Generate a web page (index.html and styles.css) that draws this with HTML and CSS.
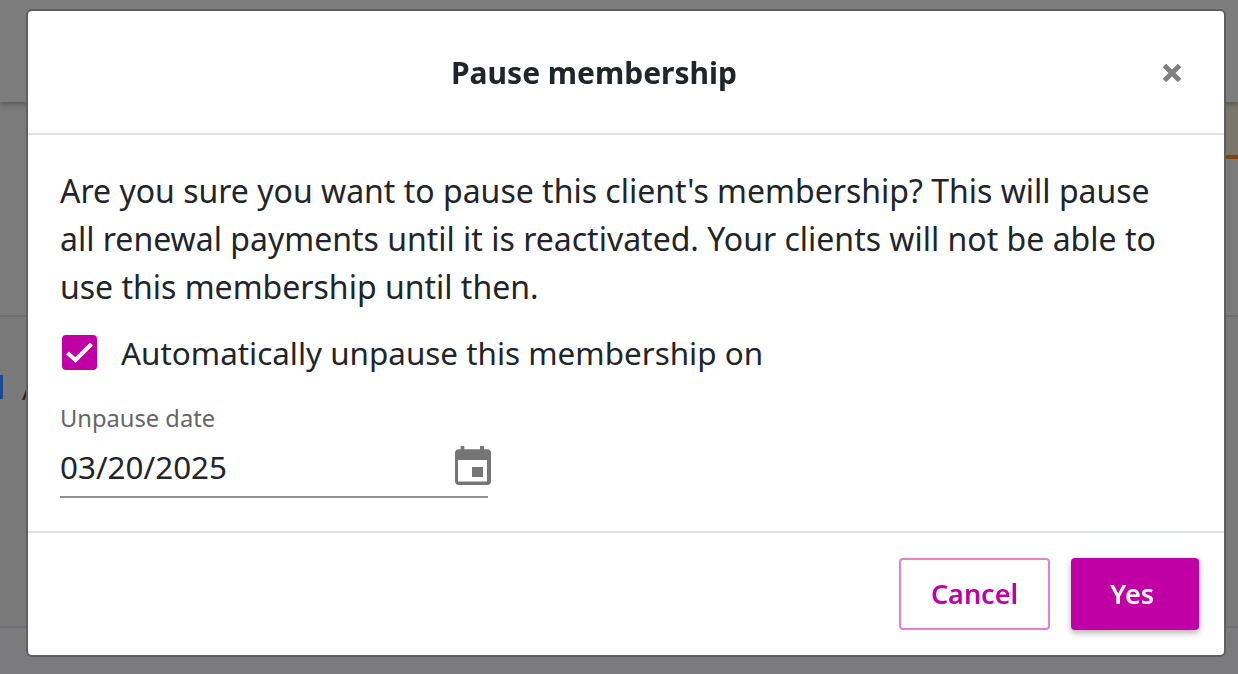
FILE: index.html
```html
<!DOCTYPE html>
<html lang="en">
<head>
<meta charset="utf-8">
<title>Pause membership</title>
<link rel="stylesheet" href="styles.css">
</head>
<body>
<div class="page">
  <div class="page-top"></div>
  <div class="page-banner"><div class="banner-image"></div></div>
  <div class="page-row"><span class="tab-mark"></span><span class="crumb">A</span></div>
  <div class="page-bottom"></div>
</div>
<div class="overlay">
  <div class="modal" role="dialog">
    <header class="modal-header">
      <h2 class="modal-title">Pause membership</h2>
      <svg class="close-icon" viewBox="0 0 20 20" aria-hidden="true"><path d="M2.4 2.4 17.6 17.6M17.6 2.4 2.4 17.6"/></svg>
    </header>
    <div class="modal-body">
      <p class="message">Are you sure you want to pause this client's membership? This will pause all renewal payments until it is reactivated. Your clients will not be able to use this membership until then.</p>
      <label class="check-row">
        <span class="checkbox"><svg viewBox="0 0 35 35" aria-hidden="true"><path d="M5.5 18 13.5 25 29.5 9"/></svg></span>
        <span class="check-label">Automatically unpause this membership on</span>
      </label>
      <div class="date-field">
        <div class="date-label">Unpause date</div>
        <div class="date-input">
          <span class="date-value">03/20/2025</span>
          <svg class="calendar-icon" viewBox="0 0 36 39" aria-hidden="true"><path fill-rule="evenodd" d="M5.7 0h3.6v3.3H25V0h4v3.3h3a4 4 0 0 1 4 4V35a4 4 0 0 1-4 4H4a4 4 0 0 1-4-4V7.3a4 4 0 0 1 4-4h1.7zM3 14v21.6h29V14z"/><rect x="17" y="21" width="11" height="10"/></svg>
        </div>
      </div>
    </div>
    <footer class="modal-footer">
      <button class="btn btn-outline" type="button">Cancel</button>
      <button class="btn btn-solid" type="button">Yes</button>
    </footer>
  </div>
</div>
</body>
</html>
```
FILE: styles.css
```css
* { box-sizing: border-box; }
html, body { margin: 0; height: 100%; overflow: hidden; }
body { background: #7b7b7c; font-family: "Noto Sans", "Open Sans", sans-serif; color: #212529; }

.page { height: 674px; display: flex; flex-direction: column; }
.page-top { height: 102px; background: #7d7d7d; box-shadow: 0 2px 6px rgba(0,0,0,.3); position: relative; }
.page-banner { height: 215px; border-bottom: 2px solid #6d6d6d; background: #7b7b7b; display: flex; justify-content: flex-end; align-items: flex-start; }
.banner-image { width: 40px; height: 57px; background: #7b766a; border-bottom: 4px solid #7d4417; }
.page-row { height: 311px; border-bottom: 2px solid #717172; display: flex; align-items: flex-start; padding-top: 58px; background: #7a7a7b; }
.tab-mark { width: 3px; height: 24px; background: #1b4a92; }
.crumb { margin-left: 19px; font-size: 28px; line-height: 28px; color: #262626; }
.page-bottom { flex: 1; background: #7b7b7e; }

.overlay { position: fixed; inset: 0; padding: 9px 12px 17px 26px; }
.modal { height: 648px; background: #fff; border: 2px solid #5f5f5f; border-radius: 6px; display: flex; flex-direction: column; }

.modal-header { height: 124px; border-bottom: 2px solid #dee2e6; display: flex; align-items: center; justify-content: center; position: relative; padding: 2px 64px 0 0; flex: none; }
.modal-title { margin: 0; font-size: 30px; font-weight: 700; line-height: 40px; color: #212529; }
.close-icon { position: absolute; right: 42px; top: 52px; width: 20px; height: 20px; fill: none; stroke: #808080; stroke-width: 5; }

.modal-body { flex: 1; padding: 32px 32px 0; }
.message { margin: 0; font-size: 32px; line-height: 48px; width: 1110px; color: #212529; }
.check-row { display: flex; align-items: center; height: 40px; margin-top: 22px; }
.checkbox { width: 35px; height: 35px; border-radius: 4px; background: #c000a4; display: flex; margin: -2px 0 0 2px; }
.checkbox svg { width: 35px; height: 35px; fill: none; stroke: #fff; stroke-width: 4; }
.check-label { margin-left: 24px; font-size: 31.4px; line-height: 40px; }

.date-field { width: 428px; margin-top: 30px; }
.date-label { font-size: 23.7px; line-height: 30px; color: #666; }
.date-input { height: 65px; border-bottom: 2px solid #8f8f8f; display: flex; align-items: center; justify-content: space-between; }
.date-value { font-size: 31.4px; line-height: 40px; color: #212529; margin-top: 4px; }
.calendar-icon { width: 36px; height: 39px; fill: #757575; margin-right: -3px; margin-top: 2px; }

.modal-footer { height: 124px; border-top: 2px solid #dee2e6; display: flex; align-items: flex-start; justify-content: flex-end; gap: 21px; padding: 25px 25px 0 0; flex: none; }
.btn { height: 72px; border-radius: 4px; font-family: inherit; font-size: 27px; font-weight: 600; padding: 0 0 2px; }
.btn-outline { width: 151px; background: #fff; border: 2px solid #e580d2; color: #c000a4; }
.btn-solid { width: 128px; padding-right: 6px; background: #c000a4; border: 0; color: #fff; box-shadow: 0 3px 6px rgba(0,0,0,.3); }
```
